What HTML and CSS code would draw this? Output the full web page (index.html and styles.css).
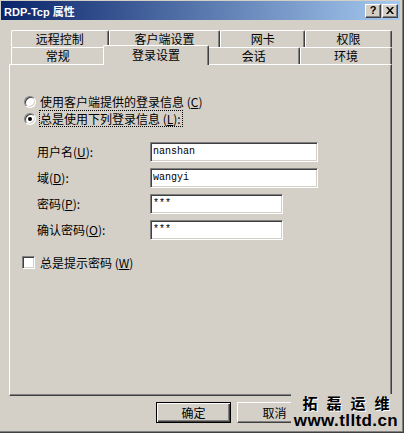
FILE: index.html
```html
<!DOCTYPE html>
<html lang="zh-CN">
<head>
    <meta charset="UTF-8">
    <title>RDP-Tcp 属性</title>
    <link rel="stylesheet" href="styles.css">
</head>
<body>
    <div class="window">
        <div class="titlebar">
            <span class="title">RDP-Tcp 属性</span>
            <div class="caption-buttons">
                <span class="cap-btn help">?</span>
                <span class="cap-btn">
                    <svg width="8" height="7" viewBox="0 0 8 7">
                        <path d="M0 0h2l2 2.5 2-2.5h2l-3 3.5 3 3.5h-2l-2-2.5-2 2.5h-2l3-3.5z" fill="#000"/>
                    </svg>
                </span>
            </div>
        </div>

        <div class="client">
            <div class="tabs">
                <div class="tab-row">
                    <div class="tab tab-remote">远程控制</div>
                    <div class="tab tab-client">客户端设置</div>
                    <div class="tab tab-nic">网卡</div>
                    <div class="tab tab-perm">权限</div>
                </div>
                <div class="tab-row">
                    <div class="tab tab-general">常规</div>
                    <div class="tab tab-logon active">登录设置</div>
                    <div class="tab tab-session">会话</div>
                    <div class="tab tab-env">环境</div>
                </div>
            </div>

            <div class="panel">
                <div class="radio-row">
                    <span class="radio"></span>
                    <span class="option-label">使用客户端提供的登录信息 (<u>C</u>)</span>
                </div>
                <div class="radio-row">
                    <span class="radio checked"></span>
                    <span class="option-label focused">总是使用下列登录信息 (<u>L</u>):</span>
                </div>

                <div class="fields">
                    <label class="field-label">用户名(<u>U</u>):</label>
                    <div class="input wide">nanshan</div>
                    <label class="field-label">域(<u>D</u>):</label>
                    <div class="input wide">wangyi</div>
                    <label class="field-label">密码(<u>P</u>):</label>
                    <div class="input">***</div>
                    <label class="field-label">确认密码(<u>O</u>):</label>
                    <div class="input">***</div>
                </div>

                <div class="check-row">
                    <span class="checkbox"></span>
                    <span class="option-label">总是提示密码 (<u>W</u>)</span>
                </div>
            </div>

            <!-- third button sits under the watermark, so only two are drawn -->
            <div class="actions">
                <button class="btn default">确定</button>
                <button class="btn">取消</button>
            </div>
        </div>

        <div class="watermark">
            <div class="wm-cn">拓磊运维</div>
            <div class="wm-url">www.tlltd.cn</div>
        </div>
    </div>
</body>
</html>
```

FILE: styles.css
```css
* {
    margin: 0;
    padding: 0;
    box-sizing: border-box;
}

body {
    background: #d4d0c8;
    font-family: "Noto Sans CJK SC", sans-serif;
    font-size: 12px;
    color: #000;
}

u {
    text-decoration: underline;
}

.window {
    position: relative;
    width: 404px;
    height: 433px;
    display: flex;
    flex-direction: column;
    background: #d4d0c8;
    border-right: 1px solid #404040;
    border-bottom: 1px solid #404040;
    box-shadow: inset -1px -1px #808080;
    padding: 1px 3px 3px 1px;
}

/* title bar */
.titlebar {
    height: 19px;
    display: flex;
    align-items: center;
    justify-content: space-between;
    padding: 0 2px 0 3px;
    background: linear-gradient(to right, #0a246a, #a6caf0);
}

.title {
    color: #fff;
    font-family: "Liberation Sans", "Noto Sans CJK SC", sans-serif;
    font-weight: bold;
    font-size: 11px;
}

.caption-buttons {
    display: flex;
    gap: 1px;
}

.cap-btn {
    width: 16px;
    height: 14px;
    display: flex;
    align-items: center;
    justify-content: center;
    background: #d4d0c8;
    border-top: 1px solid #fff;
    border-left: 1px solid #fff;
    border-right: 1px solid #404040;
    border-bottom: 1px solid #404040;
    box-shadow: inset -1px -1px #808080;
}

.cap-btn.help {
    font-family: "Liberation Sans", sans-serif;
    font-weight: bold;
    font-size: 11px;
    line-height: 1;
}

/* client area */
.client {
    flex: 1;
    display: flex;
    flex-direction: column;
    padding: 10px 8px 0 8px;
}

.tabs {
    padding-left: 2px;
}

.tab-row {
    display: flex;
    align-items: flex-start;
    height: 17px;
}

.tab {
    height: 17px;
    display: flex;
    align-items: center;
    justify-content: center;
    padding-bottom: 1px;
    background: #d4d0c8;
    border-top: 1px solid #fff;
    border-left: 1px solid #fff;
    border-right: 1px solid #404040;
    border-radius: 2px 2px 0 0;
    box-shadow: inset -1px 0 #808080;
}

.tab-remote { width: 98px; }
.tab-client { width: 112px; }
.tab-nic { width: 85px; }
.tab-perm { width: 87px; }

.tab-general { width: 94px; }
.tab-logon { width: 103px; }
.tab-session { width: 93px; }
.tab-env { width: 92px; }

.tab.active {
    position: relative;
    z-index: 1;
    width: 107px;
    height: 20px;
    margin: -2px -2px -1px -2px;
    padding-bottom: 3px;
}

.panel {
    height: 332px;
    padding: 28px 0 0 12px;
    border-top: 1px solid #fff;
    border-left: 1px solid #fff;
    border-right: 1px solid #404040;
    border-bottom: 1px solid #404040;
    box-shadow: inset -1px -1px #808080;
}

.radio-row {
    display: flex;
    align-items: center;
    height: 17px;
    padding-left: 2px;
    gap: 3px;
}

.radio {
    position: relative;
    width: 12px;
    height: 12px;
    border-radius: 50%;
    background: #fff;
    border: 1px solid;
    border-color: #808080 #fff #fff #808080;
    box-shadow: inset 1px 1px #404040, inset -1px -1px #d4d0c8;
}

.radio.checked::after {
    content: "";
    position: absolute;
    left: 3px;
    top: 3px;
    width: 4px;
    height: 4px;
    border-radius: 50%;
    background: #000;
}

.option-label {
    height: 17px;
    line-height: 15px;
    border: 1px dotted transparent;
    padding-right: 1px;
}

.option-label.focused {
    border-color: #000;
}

.fields {
    display: grid;
    grid-template-columns: 113px auto;
    row-gap: 6px;
    align-items: center;
    margin: 15px 0 0 15px;
}

.field-label {
    line-height: 20px;
}

.input {
    width: 133px;
    height: 20px;
    padding-left: 2px;
    background: #fff;
    border-top: 1px solid #808080;
    border-left: 1px solid #808080;
    border-right: 1px solid #fff;
    border-bottom: 1px solid #fff;
    box-shadow: inset 1px 1px #404040, inset -1px -1px #d4d0c8;
    font-family: "Liberation Mono", monospace;
    font-size: 10px;
    line-height: 17px;
}

.input.wide {
    width: 168px;
}

.check-row {
    display: flex;
    align-items: center;
    height: 17px;
    gap: 4px;
    margin-top: 14px;
}

.checkbox {
    width: 13px;
    height: 13px;
    background: #fff;
    border-top: 1px solid #808080;
    border-left: 1px solid #808080;
    border-right: 1px solid #fff;
    border-bottom: 1px solid #fff;
    box-shadow: inset 1px 1px #404040, inset -1px -1px #d4d0c8;
}

/* dialog buttons */
.actions {
    display: flex;
    justify-content: flex-end;
    gap: 6px;
    margin-top: 6px;
    padding-right: 80px;
}

.btn {
    width: 75px;
    height: 21px;
    background: #d4d0c8;
    font-family: "Noto Sans CJK SC", sans-serif;
    font-size: 12px;
    color: #000;
    border-top: 1px solid #fff;
    border-left: 1px solid #fff;
    border-right: 1px solid #404040;
    border-bottom: 1px solid #404040;
    box-shadow: inset -1px -1px #808080;
}

.btn.default {
    border: 1px solid #000;
    box-shadow: inset 1px 1px #fff, inset -1px -1px #404040, inset -2px -2px #808080;
}

/* watermark pasted over the corner */
.watermark {
    position: absolute;
    left: 291px;
    top: 394px;
    width: 110px;
    height: 36px;
    background: #d4d0c8;
    text-align: center;
    white-space: nowrap;
    color: #000;
}

.wm-cn {
    font-family: "Noto Sans CJK SC", sans-serif;
    font-weight: bold;
    font-size: 15px;
    line-height: 18px;
    letter-spacing: 9px;
    padding-left: 9px;
    text-shadow: 1px 1px #fff;
}

.wm-url {
    font-family: "Liberation Sans", sans-serif;
    font-weight: bold;
    font-size: 17px;
    line-height: 18px;
    letter-spacing: 0.4px;
}
```
